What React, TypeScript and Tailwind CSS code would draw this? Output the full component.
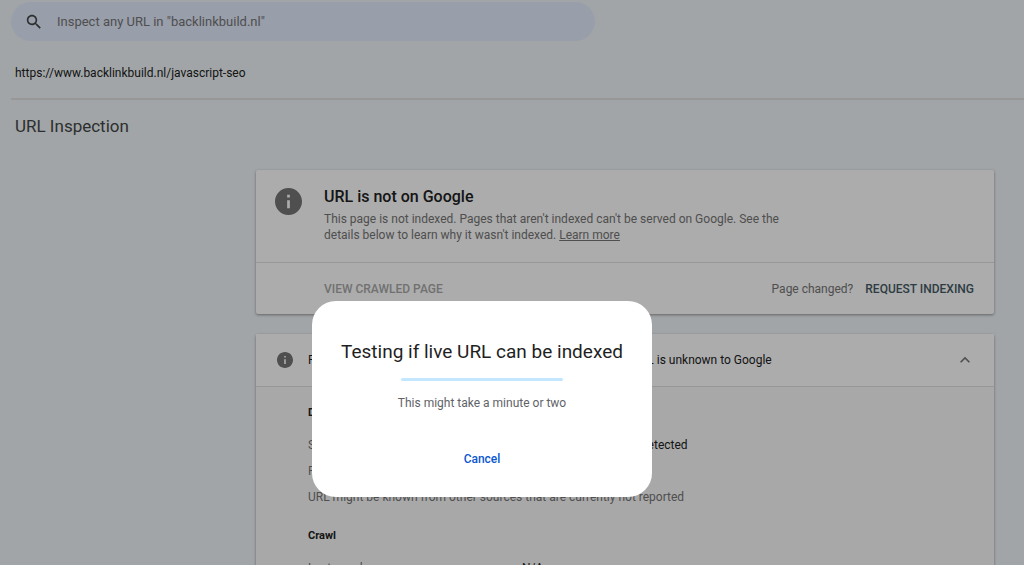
import { useState } from 'react';

type DetailRow = {
  label: string;
  value: string;
};

const discoveryRows: DetailRow[] = [
  { label: 'Sitemaps', value: 'No referring sitemaps detected' },
  { label: 'Referring page', value: 'None detected' },
];

const crawlRows: DetailRow[] = [{ label: 'Last crawl', value: 'N/A' }];

function InfoIcon({ className }: { className: string }) {
  return (
    <svg viewBox="2 2 20 20" className={className} aria-hidden="true">
      <path
        fill="currentColor"
        d="M12 2C6.48 2 2 6.48 2 12s4.48 10 10 10 10-4.48 10-10S17.52 2 12 2zm1 15h-2v-6h2v6zm0-8h-2V7h2v2z"
      />
    </svg>
  );
}

function SearchIcon() {
  return (
    <svg viewBox="2 2 20 20" className="size-4 shrink-0 text-[#444746]" aria-hidden="true">
      <path
        fill="currentColor"
        d="M15.5 14h-.79l-.28-.27C15.41 12.59 16 11.11 16 9.5 16 5.91 13.09 3 9.5 3S3 5.91 3 9.5 5.91 16 9.5 16c1.61 0 3.09-.59 4.23-1.57l.27.28v.79l5 4.99L20.49 19l-4.99-5zm-6 0C7.01 14 5 11.99 5 9.5S7.01 5 9.5 5 14 7.01 14 9.5 11.99 14 9.5 14z"
      />
    </svg>
  );
}

function DetailTable({ rows }: { rows: DetailRow[] }) {
  return (
    <table className="w-full text-left">
      <tbody>
        {rows.map((row) => (
          <tr key={row.label} className="h-[26px]">
            <th scope="row" className="w-[214px] font-normal text-[#757575]">
              {row.label}
            </th>
            <td className="text-[#212121]">{row.value}</td>
          </tr>
        ))}
      </tbody>
    </table>
  );
}

export default function App() {
  const [testing, setTesting] = useState<boolean>(true);
  const [expanded, setExpanded] = useState<boolean>(true);

  return (
    <div className="h-screen overflow-hidden bg-[#f0f5f8] font-['Roboto',sans-serif] text-[#212121]">
      {/* SEARCH */}
      <header className="pl-[11px] pt-[2px]">
        <label className="flex h-[39px] w-[584px] max-w-full items-center gap-[15px] rounded-full bg-[#e2ebfd] pl-[15px]">
          <SearchIcon />
          <input
            type="text"
            aria-label="Inspect any URL"
            placeholder={'Inspect any URL in "backlinkbuild.nl"'}
            className="min-w-0 flex-1 bg-transparent text-[13px] outline-none placeholder:text-[#757575]"
          />
        </label>
        <p className="flex h-[57px] items-center pl-1 pt-[6px] text-[12px]">
          https://www.backlinkbuild.nl/javascript-seo
        </p>
        <hr className="border-t-2 border-[#e0e0e0]" />
      </header>

      <main>
        <h1 className="px-[15px] pt-[14px] text-[17px] leading-6 text-[#444746]">
          URL Inspection
        </h1>

        <div className="ml-[256px] mr-[30px] mt-8 flex flex-col gap-5">
          {/* VERDICT */}
          <section className="rounded-xs bg-white shadow-[0_1px_3px_rgba(0,0,0,0.4)]">
            <div className="flex h-[93px] gap-[22px] border-b border-[#e0e0e0] pl-[19px] pt-[17px]">
              <InfoIcon className="mt-px size-[27px] shrink-0 text-[#757575]" />
              <div>
                <h2 className="text-base font-medium leading-5">URL is not on Google</h2>
                <p className="max-w-[480px] pt-1 text-[12px] leading-4 text-[#757575]">
                  This page is not indexed. Pages that aren't indexed can't be served on Google. See
                  the details below to learn why it wasn't indexed.{' '}
                  <a href="#learn" className="underline">
                    Learn more
                  </a>
                </p>
              </div>
            </div>
            <div className="flex h-[51px] items-center pl-[68px] pr-5 text-[12px]">
              <button type="button" disabled className="font-medium text-[#a8a8a8]">
                VIEW CRAWLED PAGE
              </button>
              <span className="ml-auto text-[#757575]">Page changed?</span>
              <button type="button" className="ml-3 font-medium text-[#455a64]">
                REQUEST INDEXING
              </button>
            </div>
          </section>

          {/* PAGE INDEXING */}
          <section className="rounded-xs bg-[#fafafa] text-[12px] shadow-[0_1px_3px_rgba(0,0,0,0.4)]">
            <button
              type="button"
              aria-expanded={expanded}
              onClick={() => setExpanded(!expanded)}
              className="flex h-[53px] w-full items-center border-b border-[#e0e0e0] bg-white pl-[21px] pr-6 text-left"
            >
              <InfoIcon className="mr-[15px] size-4 shrink-0 text-[#757575]" />
              <span className="w-[214px] shrink-0">Page indexing</span>
              <span className="flex-1">Page is not indexed: URL is unknown to Google</span>
              <svg viewBox="6 6 12 12" className="size-[10px] text-[#757575]" aria-hidden="true">
                <path
                  fill="currentColor"
                  d="M12 8l-6 6 1.41 1.41L12 10.83l4.59 4.58L18 14z"
                />
              </svg>
            </button>
            {expanded && (
              <div className="pb-6 pl-[52px] pr-5">
                <h3 className="pb-[11px] pt-[18px] text-[11px] font-bold leading-4">Discovery</h3>
                <DetailTable rows={discoveryRows} />
                <p className="leading-[26px] text-[#757575]">
                  URL might be known from other sources that are currently not reported
                </p>
                <h3 className="pb-[11px] pt-[18px] text-[11px] font-bold leading-4">Crawl</h3>
                <DetailTable rows={crawlRows} />
              </div>
            )}
          </section>
        </div>
      </main>

      {/* LIVE TEST DIALOG */}
      {testing && (
        <div className="fixed inset-0 flex items-start justify-center bg-black/[0.325] pr-[60px] pt-[301px]">
          <div
            role="dialog"
            aria-modal="true"
            aria-labelledby="live-test-title"
            className="flex w-[340px] flex-col items-center rounded-3xl bg-white pb-7 pt-[37px]"
          >
            <h2 id="live-test-title" className="text-[19px] leading-7 text-[#1f1f1f]">
              Testing if live URL can be indexed
            </h2>
            <div
              role="progressbar"
              aria-label="Live test progress"
              className="mt-3 h-[3px] w-[162px] rounded-full bg-[#c2e7ff]"
            />
            <p className="pt-[14px] text-[12px] leading-4 text-[#5f6368]">
              This might take a minute or two
            </p>
            <button
              type="button"
              onClick={() => setTesting(false)}
              className="mt-[38px] text-[12px] font-medium leading-5 text-[#0b57d0]"
            >
              Cancel
            </button>
          </div>
        </div>
      )}
    </div>
  );
}
